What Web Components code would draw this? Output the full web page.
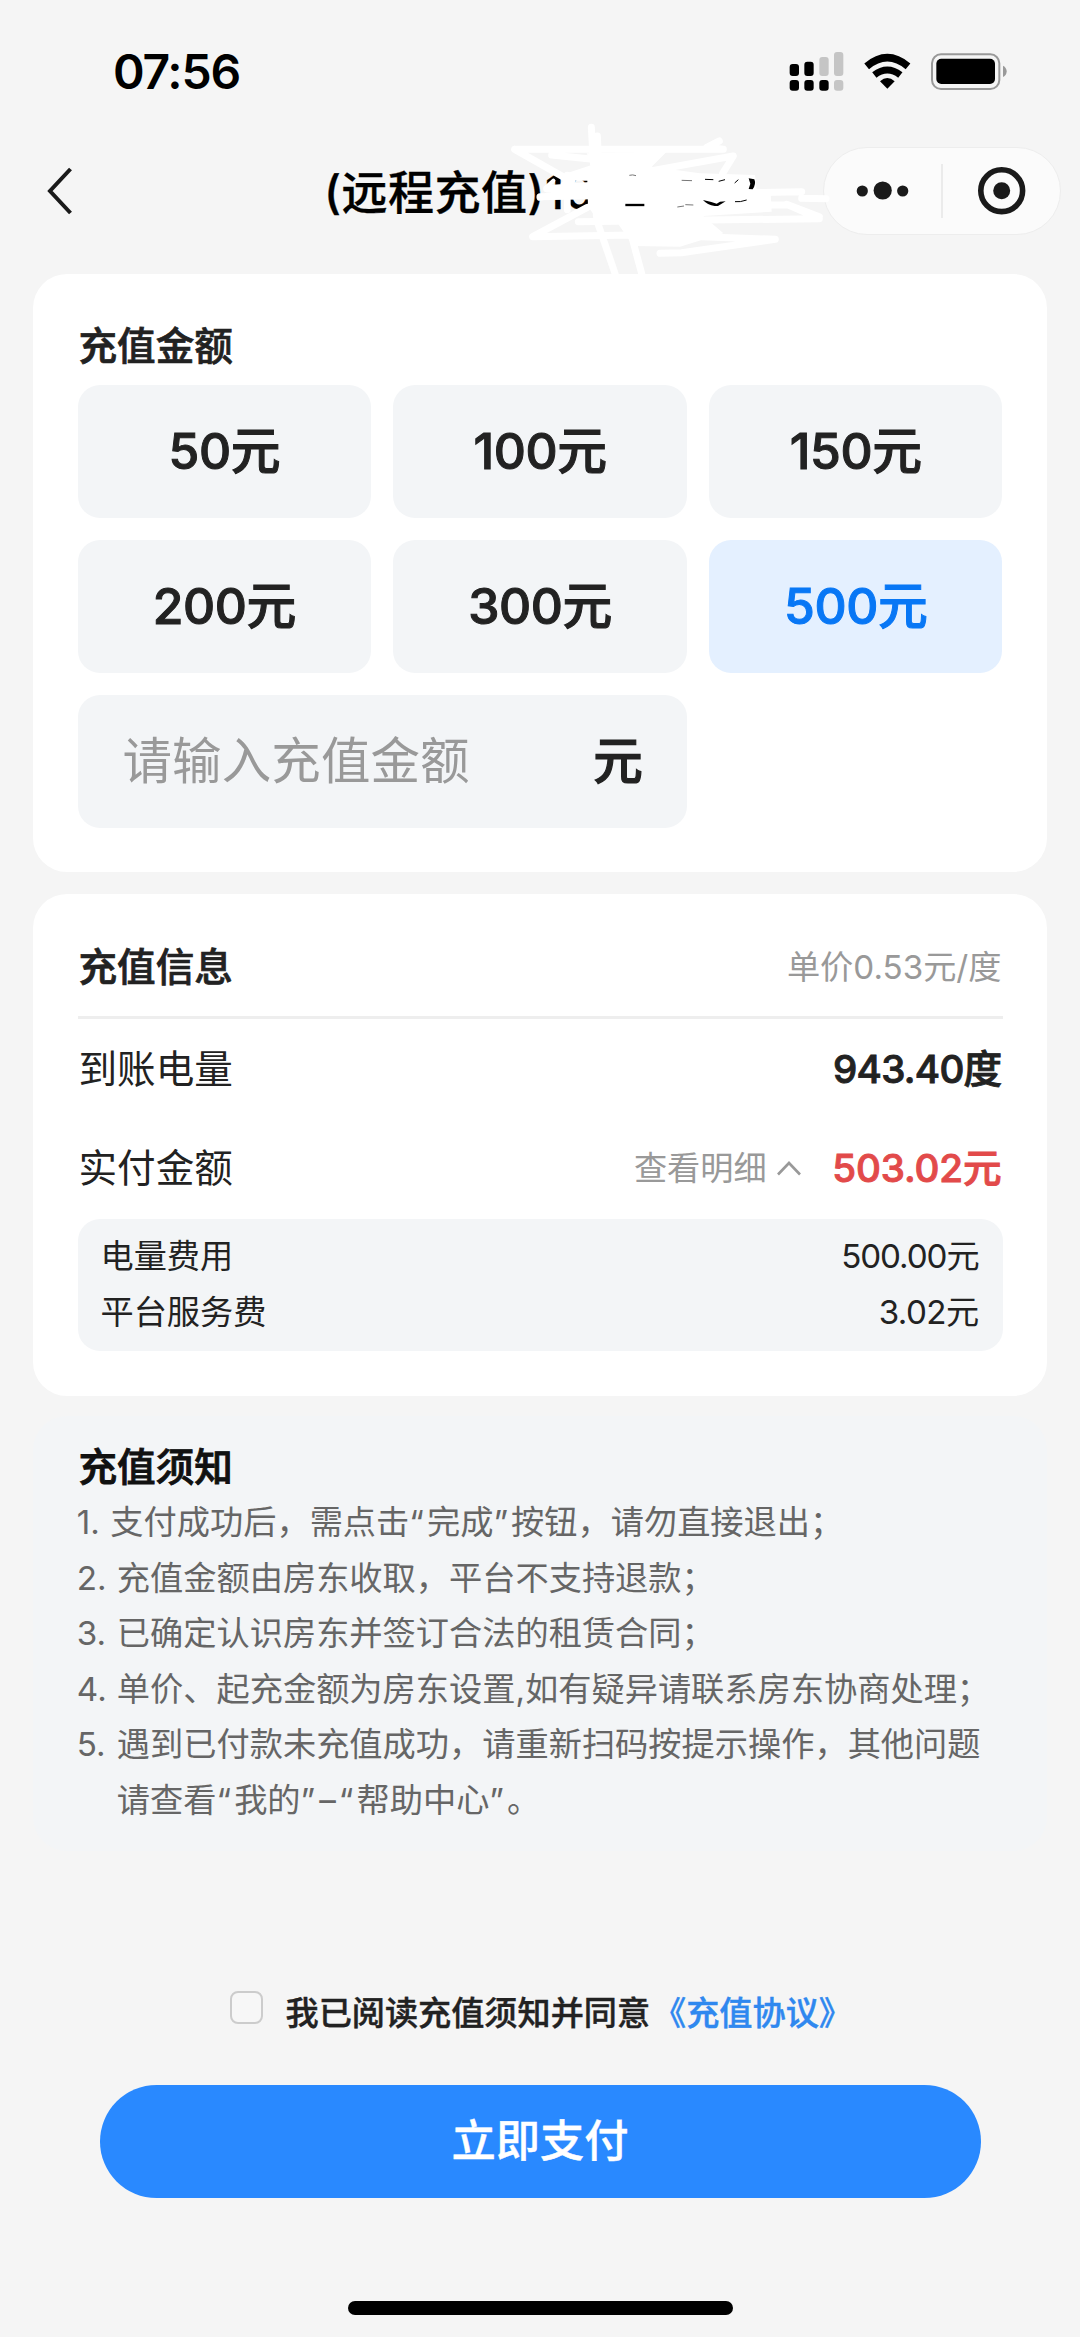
<!DOCTYPE html>
<html lang="zh-CN">
<head>
<meta charset="utf-8">
<title>远程充值</title>
<style>
html,body{margin:0;background:#f5f5f5}
body{width:1080px;height:2337px;overflow:hidden;font-family:Inter,"Noto Sans CJK SC",sans-serif;color:#222}
</style>
</head>
<body>
<recharge-page></recharge-page>
<script>
const define = (name, html) => customElements.define(name, class extends HTMLElement {
  constructor() {
    super();
    this.attachShadow({mode: 'open'}).innerHTML = html;
  }
});

define('status-bar', `
<style>
:host{display:flex;justify-content:space-between;height:147px;padding:0 71.6px 0 113px;box-sizing:border-box}
time{font-size:48px;font-weight:600;line-height:58px;margin-top:43px;color:#000;letter-spacing:-1.2px}
svg{margin-top:50px}
</style>
<time>07:56</time>
<svg width="219" height="44" viewBox="0 0 657 132">
  <g transform="translate(-88 -60)">
    <g fill="#000"><rect x="90" y="102" width="28" height="36" rx="9"/><rect x="134" y="95" width="28" height="43" rx="9"/>
    <rect x="90" y="150" width="28" height="32" rx="9"/><rect x="134" y="150" width="28" height="32" rx="9"/><rect x="179" y="150" width="28" height="32" rx="9"/></g>
    <g fill="#c5c5c5"><rect x="179" y="81" width="28" height="57" rx="9"/><rect x="223" y="66" width="28" height="72" rx="9"/><rect x="223" y="150" width="28" height="32" rx="9"/></g>
    <path d="M321 109Q383 57 445 109" fill="none" stroke="#000" stroke-width="22"/>
    <path d="M344 135Q383 105 422 135" fill="none" stroke="#000" stroke-width="21"/>
    <path d="M361 154Q383 134 405 154L383 176Z"/>
    <rect x="517" y="73" width="202" height="104" rx="27" fill="none" stroke="#999" stroke-width="6"/>
    <rect x="530" y="86" width="176" height="76" rx="15"/>
    <path d="M730 107Q741 113 741 124Q741 136 730 141Z" fill="#999"/>
  </g>
</svg>`);

define('mini-capsule', `
<style>
:host{display:block;width:238px;height:88px;box-sizing:border-box;border:1.5px solid #ededed;border-radius:44px;background:#fbfbfb}
svg{display:block;margin:-1.5px}
</style>
<svg width="238" height="88"><g fill="#1a1a1a"><circle cx="39.3" cy="44" r="5.6"/><circle cx="59.7" cy="43.5" r="9.1"/><circle cx="79.7" cy="44" r="5.6"/><circle cx="178.7" cy="43.7" r="8.5"/></g>
<circle cx="178.7" cy="43.7" r="20.9" fill="none" stroke="#1a1a1a" stroke-width="5.6"/><path d="M119 17V71" stroke="#e8e8e8" stroke-width="1.6"/></svg>`);

define('nav-bar', `
<style>
:host{display:flex;align-items:flex-start;height:127px;padding:0 19px 0 46px;box-sizing:border-box;position:relative}
.back{margin-top:18px}
h1{margin:9px 0 0 248px;font-size:46px;font-weight:500;line-height:72px;color:#000;white-space:nowrap;letter-spacing:.5px;-webkit-text-stroke:.3px}
mini-capsule{margin-left:auto}
.scribble{position:absolute;left:500px;top:-37px}
</style>
<svg class="back" width="30" height="52" fill="none"><path d="M24.5 4L4 26L24.5 48" stroke="#1a1a1a" stroke-width="4"/></svg>
<h1>(远程充值)10</h1>
<mini-capsule></mini-capsule>
<svg class="scribble" width="340" height="180" viewBox="0 0 1020 540" fill="none" stroke="#fff" stroke-width="21" stroke-linecap="round" stroke-linejoin="round">
  <path fill="#fff" stroke="none" d="M200 190L275 165L260 130L500 125L455 170L600 190L765 195L770 240L812 250L815 305L610 318L670 370L540 410L400 408L350 335L290 325L264 290L262 212L200 212Z"/>
  <path d="M44 118H670L620 112L658 93M44 118L215 215M155 135L300 150L410 190L700 138L668 190"/>
  <path d="M274 52L290 330L345 490M292 78L296 160"/>
  <path d="M120 260L905 245M140 236L280 226M905 265L978 266M120 262L260 240"/>
  <path d="M202 195V300" stroke-width="20"/>
  <path d="M235 335L958 326L865 285H800M958 320L860 283"/>
  <path d="M98 380L262 292M98 380L440 374L826 388L545 428L480 430M395 380L425 490"/>
  <path d="M140 230L160 212M188 222L210 205" stroke-width="12"/>
  <g stroke="#000" stroke-linecap="butt" stroke-width="3">
    <path d="M388 196Q398 193 408 197M545 211L576 212M532 291L552 288M556 284L580 285" stroke="#777"/>
    <path d="M376 285H433" stroke-width="7"/><path d="M615 208L640 209M656 214L675 209M704 219L715 209M705 275Q720 277 740 270"/>
    <path fill="#000" stroke="none" d="M609 270L634 276L650 281L660 275L677 274L654 288H644Q622 285 609 270ZM746 205L763 208Q769 222 758 238L746 237L751 221Z"/>
  </g>
</svg>`);

define('ui-card', `
<style>
:host{display:block;margin:0 33px;padding:44px 44.5px;border-radius:34px;background:#fff}
</style><slot></slot>`);

define('section-title', `
<style>:host{display:block;font-size:38.6px;font-weight:500;line-height:56px;padding-left:1px;-webkit-text-stroke:.7px}
:host([strong]){line-height:55px;color:#111;-webkit-text-stroke:.9px}</style><slot></slot>`);

define('amount-tile', `
<style>
:host{display:flex;align-items:center;justify-content:center;height:133px;padding-bottom:2px;box-sizing:border-box;border-radius:22px;background:#f3f5f7;font-size:49.8px;font-weight:500;line-height:60px;letter-spacing:-.4px;-webkit-text-stroke:1px}
:host([selected]){background:#e4f0ff;color:#0877f5}
</style><slot></slot>`);

define('amount-input', `
<style>
:host{display:flex;align-items:center;justify-content:space-between;grid-column:span 2;height:133px;padding:0 44px 2px 45px;border-radius:22px;background:#f3f5f7;box-sizing:border-box;font-size:49.5px;line-height:60px}
.hint{color:#999;letter-spacing:.1px}.unit{font-weight:500;-webkit-text-stroke:1.2px}
</style><span class="hint"><slot></slot></span><span class="unit">元</span>`);

define('amount-grid', `
<style>:host{display:grid;grid-template-columns:repeat(3,1fr);gap:22px;margin-top:11px}</style><slot></slot>`);

define('info-row', `
<style>
:host{display:flex;justify-content:space-between;align-items:center;height:100px;padding:0 1px;font-size:38.6px;line-height:56px}
:host([head]){height:57px;padding-bottom:21px;border-bottom:3px solid #eee}
:host([pay]){height:98px}
:host([small]){font-size:33.2px;height:55.5px;padding:0 24px}
.r{display:flex;align-items:center}
</style><slot></slot><span class="r"><slot name="value"></slot></span>`);

define('value-text', `
<style>
:host{font-weight:500;font-size:38.6px;letter-spacing:-.7px;-webkit-text-stroke:.9px}
:host([pay]){color:#e24a4a;letter-spacing:-.1px}
:host([muted]){font-size:33.2px;font-weight:400;color:#999;letter-spacing:0;-webkit-text-stroke:0}
:host([plain]){font-size:33.2px;font-weight:400;letter-spacing:-1.1px;-webkit-text-stroke:0}
:host([tight]){letter-spacing:-.6px}
</style><slot></slot>`);

define('detail-toggle', `
<style>:host{display:flex;align-items:center;font-size:33.2px;color:#999;margin-right:30px}svg{margin:0 0 0 9.5px}</style>
<slot></slot><svg width="26" height="18" fill="none"><path d="M2 15.5L13 4L24 15.5" stroke="#999" stroke-width="2.6"/></svg>`);

define('fee-box', `
<style>:host{display:block;height:132px;margin-top:2px;padding:9.5px 0;box-sizing:border-box;border-radius:22px;background:#f3f5f7}
::slotted(*){margin-left:-1px}</style><slot></slot>`);

customElements.define('notice-item', class extends HTMLElement {
  constructor() {
    super();
    this.attachShadow({mode: 'open'}).innerHTML = `
<style>
:host{display:flex;margin-left:-.7px;font-size:33.22px;line-height:55.6px;color:#666;white-space:nowrap}
.n{width:40px}
:host([n="1"]) .n{width:33.5px}
</style><span class="n"></span><span><slot></slot></span>`;
  }
  /* The number sits in its own column so that wrapped lines stay indented. */
  connectedCallback() {
    this.shadowRoot.querySelector('.n').textContent = this.getAttribute('n') + '.';
  }
});

define('agree-row', `
<style>
:host{display:flex;margin:140px 0 0 230px;height:94px;font-size:33.15px;font-weight:500;line-height:52px}
i{width:33px;height:33px;box-sizing:border-box;border:2px solid #ccc;border-radius:8px;margin-right:22.5px;background:#f7f7f7}
.t{margin-top:-4px;-webkit-text-stroke:.4px}
a{color:#2f88ef;margin-left:3px}
</style><i></i><span class="t"><slot></slot><a><slot name="link"></slot></a></span>`);

define('pay-button', `
<style>
:host{display:block;margin:0 99.5px;height:113px;border-radius:57px;background:#2989ff;color:#fff;text-align:center;font-size:44.3px;font-weight:500;line-height:112px;-webkit-text-stroke:.4px}
</style><slot></slot>`);

define('home-indicator', `
<style>:host{display:block;width:385px;height:14px;margin:103px auto 0;border-radius:7px;background:#000}</style>`);

define('recharge-page', `
<style>
:host{display:flex;flex-direction:column;height:2337px}
.info{margin-top:22px;padding-bottom:45px}
.notice{margin-top:20px;padding-top:24px;padding-bottom:22.4px;background:#f3f5f7}
.q{letter-spacing:3px}
.dash{margin:0 3px 0 1px}
</style>
<status-bar></status-bar>
<nav-bar></nav-bar>
<ui-card>
  <section-title>充值金额</section-title>
  <amount-grid>
    <amount-tile>50元</amount-tile><amount-tile>100元</amount-tile><amount-tile>150元</amount-tile>
    <amount-tile>200元</amount-tile><amount-tile>300元</amount-tile><amount-tile selected>500元</amount-tile>
    <amount-input>请输入充值金额</amount-input>
  </amount-grid>
</ui-card>
<ui-card class="info">
  <info-row head><section-title style="padding:0">充值信息</section-title><value-text slot="value" muted>单价0.53元/度</value-text></info-row>
  <info-row>到账电量<value-text slot="value">943.40度</value-text></info-row>
  <info-row pay>实付金额<detail-toggle slot="value">查看明细</detail-toggle><value-text slot="value" pay>503.02元</value-text></info-row>
  <fee-box>
    <info-row small>电量费用<value-text slot="value" plain>500.00元</value-text></info-row>
    <info-row small>平台服务费<value-text slot="value" plain tight>3.02元</value-text></info-row>
  </fee-box>
</ui-card>
<ui-card class="notice">
  <section-title strong>充值须知</section-title>
  <notice-item n="1">支付成功后，需点击<span class="q">“</span>完成<span class="q">”</span>按钮，请勿直接退出；</notice-item>
  <notice-item n="2">充值金额由房东收取，平台不支持退款；</notice-item>
  <notice-item n="3">已确定认识房东并签订合法的租赁合同；</notice-item>
  <notice-item n="4">单价、起充金额为房东设置,如有疑异请联系房东协商处理；</notice-item>
  <notice-item n="5">遇到已付款未充值成功，请重新扫码按提示操作，其他问题<br>请查看<span class="q">“</span>我的<span class="q">”</span><span class="dash">–</span><span class="q">“</span>帮助中心<span class="q">”</span>。</notice-item>
</ui-card>
<agree-row>我已阅读充值须知并同意<span slot="link">《充值协议》</span></agree-row>
<pay-button>立即支付</pay-button>
<home-indicator></home-indicator>`);
</script>
</body>
</html>
